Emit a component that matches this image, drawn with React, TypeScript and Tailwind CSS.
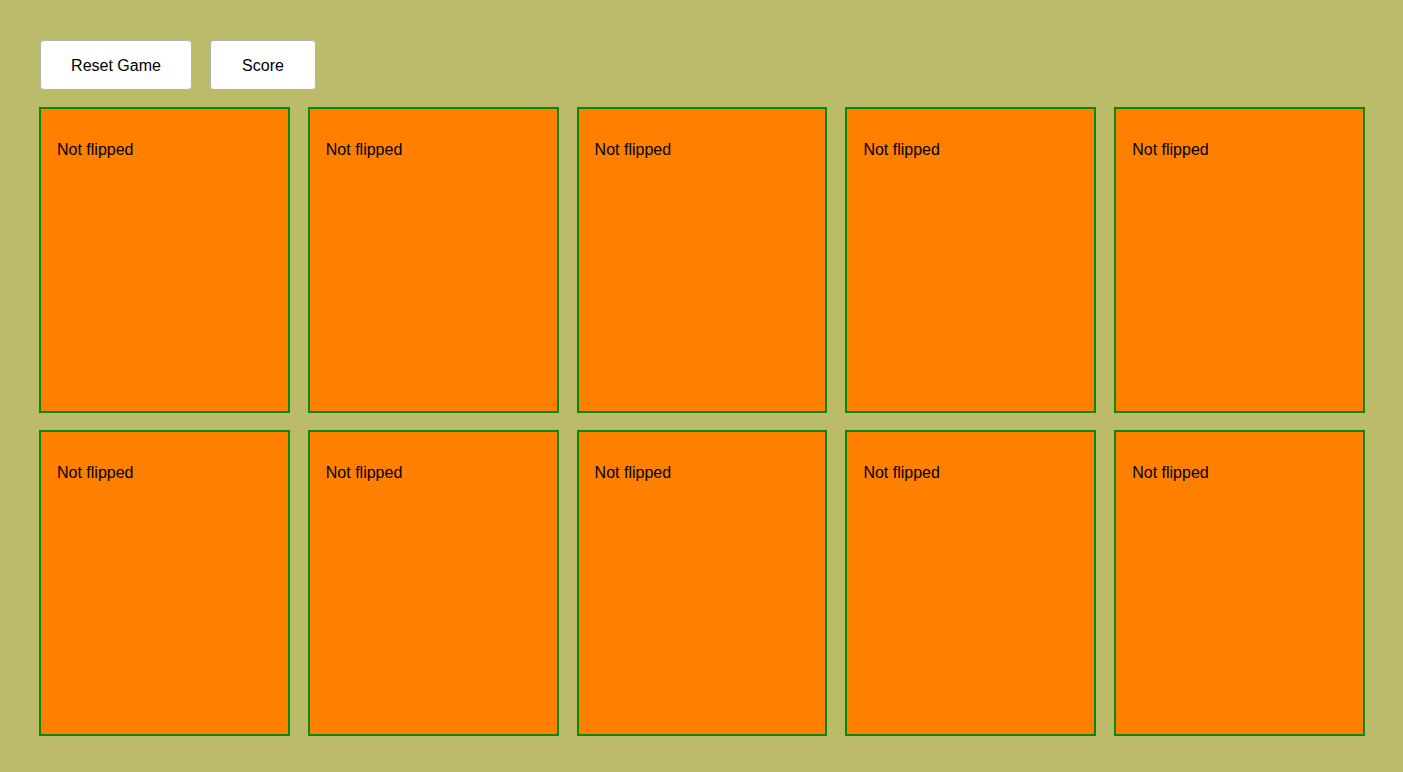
import React from "react";

export default function App() {
  const cards = Array.from({ length: 10 }, (_, i) => ({ id: i, flipped: false }));
  return (
    <div
      className="min-h-[772px] bg-[#bcbb69] pl-[39px] pr-[38px] pt-[40px] pb-[35px]"
      style={{ fontFamily: '"Liberation Sans", Arial, sans-serif' }}
    >
      <div className="flex gap-[18px] pl-[1px]">
        <button className="h-[50px] w-[152px] rounded-[4px] border border-[#b3b3b3] bg-white pt-[2px] text-[16px] text-black">
          Reset Game
        </button>
        <button className="h-[50px] w-[106px] rounded-[4px] border border-[#b3b3b3] bg-white pt-[2px] text-[16px] text-black">
          Score
        </button>
      </div>
      <div className="mt-[17px] grid grid-cols-5 gap-x-[18px] gap-y-[17px]">
        {cards.map((card) => (
          <div
            key={card.id}
            className="h-[306px] border-2 border-[#088a08] bg-[#ff8000] px-4 pt-[32px]"
          >
            <p className="text-[16px] leading-[18px] text-black">
              {card.flipped ? "Flipped" : "Not flipped"}
            </p>
          </div>
        ))}
      </div>
    </div>
  );
}
